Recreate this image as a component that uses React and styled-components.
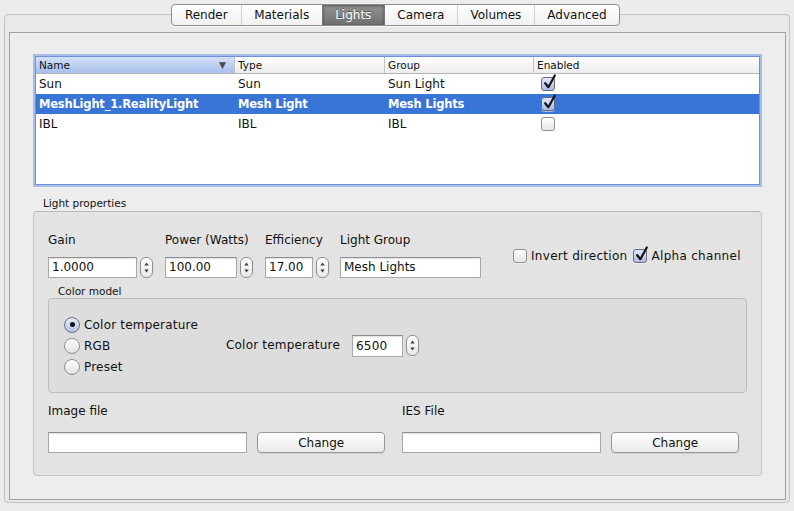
import React from "react";
import styled, { createGlobalStyle } from "styled-components";

const Global = createGlobalStyle`
  html, body { margin: 0; padding: 0; background: #ececec; }
  body { font-family: "DejaVu Sans", "Liberation Sans", sans-serif; font-size: 12px; color: #111; }
  * { box-sizing: border-box; }
`;

const Page = styled.div`
  width: 794px;
  height: 511px;
  background: #ececec;
  padding: 14px 0 0 4px;
  overflow: hidden;
`;

const TabFrame = styled.div`
  width: 786px;
  border: 1px solid #c2c2c2;
  border-radius: 4px;
  background: #e9e9e9;
  display: flex;
  flex-direction: column;
  padding: 0 3px 2px 4px;
`;

const TabBar = styled.div`
  align-self: center;
  margin: -11px 0 0 -4px;
  height: 22px;
  display: flex;
  border: 1px solid #8e8e8e;
  border-radius: 4px;
  overflow: hidden;
  background: linear-gradient(#ffffff, #f1f1f1);
  box-shadow: 0 1px 0 rgba(255,255,255,0.7);
`;

const Tab = styled.div`
  padding: 0 ${p => p.$pad}px;
  display: flex;
  align-items: center;
  font-size: 12px;
  color: ${p => (p.$active ? "#fff" : "#111")};
  background: ${p => (p.$active ? "linear-gradient(#939393, #6f6f6f)" : "transparent")};
  box-shadow: ${p => (p.$active ? "inset 0 1px 3px rgba(0,0,0,0.45)" : "none")};
  text-shadow: ${p => (p.$active ? "0 -1px 0 rgba(0,0,0,0.4)" : "none")};
  border-left: ${p => (p.$first ? "none" : p.$active || p.$afterActive ? "1px solid #777" : "1px solid #d0d0d0")};
`;

const InnerPane = styled.div`
  margin-top: 6px;
  border: 1px solid #a2a2a2;
  background: #ededed;
  padding: 21px 23px 23px 23px;
  display: flex;
  flex-direction: column;
`;

const Table = styled.div`
  margin: 2px;
  height: 129px;
  background: #fff;
  border: 1px solid #6f8fd8;
  box-shadow: 0 0 0 2px #a9bdea;
  display: flex;
  flex-direction: column;
`;

const cols = "198px 150px 149px 1fr";

const HeaderRow = styled.div`
  display: grid;
  grid-template-columns: ${cols};
  height: 17px;
  border-bottom: 1px solid #b5b5b5;
  background: linear-gradient(#ffffff, #ececec);
`;

const HeaderCell = styled.div`
  display: flex;
  align-items: center;
  justify-content: space-between;
  padding: 0 8px 0 3px;
  font-size: 10.5px;
  color: #111;
  border-left: ${p => (p.$first ? "none" : "1px solid #c3c3c3")};
  background: ${p => (p.$sorted ? "linear-gradient(#d4e0f7, #a8c0ee)" : "transparent")};
`;

const SortArrow = styled.span`
  font-size: 9px;
  color: #4a4a4a;
`;

const Row = styled.div`
  display: grid;
  grid-template-columns: ${cols};
  height: 20px;
  align-items: center;
  background: ${p => (p.$selected ? "#3875d7" : "transparent")};
  color: ${p => (p.$selected ? "#fff" : "#111")};
  font-weight: ${p => (p.$selected ? "bold" : "normal")};
  font-size: ${p => (p.$selected ? "11.5px" : "12px")};
  letter-spacing: ${p => (p.$selected ? "-0.2px" : "0")};
`;

const Cell = styled.div`
  padding-left: ${p => (p.$first ? 3 : 4)}px;
  white-space: nowrap;
  overflow: hidden;
`;

const CheckCell = styled.div`
  padding-left: 8px;
  display: flex;
  align-items: center;
`;

const BoxWrap = styled.span`
  position: relative;
  width: 14px;
  height: 14px;
  flex: none;
  display: inline-block;
  border: 1px solid ${p => (p.$checked ? "#6b6b86" : "#8f8f8f")};
  border-radius: 3px;
  background: ${p => (p.$checked ? "linear-gradient(#dfe6f7, #aebde6)" : "linear-gradient(#ffffff, #e6e6e6)")};
  box-shadow: 0 1px 0 rgba(255,255,255,0.5);
`;

const Tick = styled.svg`
  position: absolute;
  left: 1px;
  top: -4px;
  overflow: visible;
`;

const CheckBox = ({ checked }) => (
  <BoxWrap $checked={checked}>
    {checked && (
      <Tick width="14" height="16" viewBox="0 0 14 16">
        <path d="M2.2 9.2 L5.4 13.2 L11.8 1.4" fill="none" stroke="#151515" strokeWidth="2.2" strokeLinecap="round" strokeLinejoin="round" />
      </Tick>
    )}
  </BoxWrap>
);

const SmallLabel = styled.div`
  font-size: 10.5px;
  line-height: 14px;
  height: 14px;
  margin: ${p => p.$m};
  padding-left: ${p => p.$indent}px;
  color: #111;
`;

const GroupBox = styled.div`
  margin-top: 1px;
  border: 1px solid #c4c4c4;
  border-top-color: #b8b8b8;
  border-radius: 4px;
  background: #e3e3e3;
  padding: 21px 14px 22px 14px;
  display: flex;
  flex-direction: column;
`;

const TopRow = styled.div`
  display: flex;
  align-items: center;
  height: 45px;
`;

const Field = styled.div`
  display: flex;
  flex-direction: column;
  gap: 9px;
  margin-right: ${p => p.$mr}px;
`;

const Label = styled.div`
  font-size: 12px;
  line-height: 15px;
  height: 15px;
  white-space: nowrap;
`;

const InputRow = styled.div`
  display: flex;
  align-items: center;
  gap: ${p => p.$gap ?? 3}px;
`;

const TextInput = styled.div`
  width: ${p => p.$w}px;
  height: ${p => p.$h || 21}px;
  border: 1px solid #a8a8a8;
  border-top-color: #8e8e8e;
  background: #fff;
  box-shadow: inset 0 1px 1px rgba(0,0,0,0.12);
  font-size: 12px;
  line-height: ${p => (p.$h || 21) - 2}px;
  padding-left: 3px;
  white-space: nowrap;
  overflow: hidden;
`;

const SpinBox = styled.div`
  width: 13px;
  height: 21px;
  border: 1px solid #8f8f8f;
  border-radius: 6px;
  background: linear-gradient(#ffffff, #e9e9e9);
  display: flex;
  align-items: center;
  justify-content: center;
`;

const Spinner = () => (
  <SpinBox>
    <svg width="7" height="13" viewBox="0 0 7 13">
      <path d="M3.5 1.5 L5.6 4.6 L1.4 4.6 Z" fill="#3a3a3a" />
      <path d="M3.5 11.5 L5.6 8.4 L1.4 8.4 Z" fill="#3a3a3a" />
    </svg>
  </SpinBox>
);

const CheckOption = styled.label`
  display: flex;
  align-items: center;
  gap: 4px;
  font-size: 12px;
  letter-spacing: 0.3px;
  margin-left: ${p => p.$ml}px;
  white-space: nowrap;
`;

const ColorBox = styled.div`
  border: 1px solid #bcbcbc;
  border-radius: 4px;
  background: #dddddd;
  padding: 15px 15px 15px 15px;
  display: flex;
  align-items: center;
`;

const RadioGroup = styled.div`
  width: 162px;
  display: flex;
  flex-direction: column;
`;

const RadioRow = styled.div`
  height: 21px;
  display: flex;
  align-items: center;
  gap: 4px;
  font-size: 12px;
  letter-spacing: 0.2px;
`;

const RadioCircle = styled.span`
  width: 16px;
  height: 16px;
  border-radius: 50%;
  border: 1px solid ${p => (p.$on ? "#6b6b86" : "#8f8f8f")};
  background: ${p => (p.$on ? "linear-gradient(#e6ecf9, #b3c3e8)" : "linear-gradient(#ffffff, #e2e2e2)")};
  display: flex;
  align-items: center;
  justify-content: center;
  flex: none;
`;

const Dot = styled.span`
  width: 5px;
  height: 5px;
  border-radius: 50%;
  background: #111;
`;

const Radio = ({ on, children }) => (
  <RadioRow>
    <RadioCircle $on={on}>{on && <Dot />}</RadioCircle>
    {children}
  </RadioRow>
);

const TempRow = styled.div`
  display: flex;
  align-items: center;
  gap: 12px;
  letter-spacing: 0.2px;
`;

const FileGrid = styled.div`
  margin-top: 11px;
  display: grid;
  grid-template-columns: 337px 337px;
  column-gap: 17px;
`;

const FileCol = styled.div`
  display: flex;
  flex-direction: column;
  gap: 13px;
`;

const Button = styled.button`
  width: 128px;
  height: 21px;
  margin-left: 10px;
  border: 1px solid #979797;
  border-radius: 4px;
  background: linear-gradient(#ffffff, #e9e9e9);
  box-shadow: 0 1px 1px rgba(0,0,0,0.08);
  font-family: "DejaVu Sans", "Liberation Sans", sans-serif;
  font-size: 12px;
  color: #111;
  padding: 0;
`;

const tabs = [
  { t: "Render", pad: 13 },
  { t: "Materials", pad: 12.5 },
  { t: "Lights", pad: 12.5, active: true },
  { t: "Camera", pad: 12.5 },
  { t: "Volumes", pad: 12.5 },
  { t: "Advanced", pad: 12.5 },
];

const rows = [
  { name: "Sun", type: "Sun", group: "Sun Light", on: true },
  { name: "MeshLight_1.RealityLight", type: "Mesh Light", group: "Mesh Lights", on: true, sel: true },
  { name: "IBL", type: "IBL", group: "IBL", on: false },
];

export default function App() {
  return (
    <>
      <Global />
      <Page>
        <TabFrame>
          <TabBar>
            {tabs.map((tb, i) => (
              <Tab key={tb.t} $pad={tb.pad} $first={i === 0} $active={tb.active} $afterActive={i > 0 && tabs[i - 1].active}>
                {tb.t}
              </Tab>
            ))}
          </TabBar>
          <InnerPane>
            <Table>
              <HeaderRow>
                <HeaderCell $first $sorted>Name<SortArrow>▼</SortArrow></HeaderCell>
                <HeaderCell>Type</HeaderCell>
                <HeaderCell>Group</HeaderCell>
                <HeaderCell>Enabled</HeaderCell>
              </HeaderRow>
              {rows.map(r => (
                <Row key={r.name} $selected={r.sel}>
                  <Cell $first>{r.name}</Cell>
                  <Cell>{r.type}</Cell>
                  <Cell>{r.group}</Cell>
                  <CheckCell><CheckBox checked={r.on} /></CheckCell>
                </Row>
              ))}
            </Table>
            <SmallLabel $m="9px 0 0 0" $indent={10}>Light properties</SmallLabel>
            <GroupBox>
              <TopRow>
                <Field $mr={12}>
                  <Label>Gain</Label>
                  <InputRow><TextInput $w={89}>1.0000</TextInput><Spinner /></InputRow>
                </Field>
                <Field $mr={12}>
                  <Label>Power (Watts)</Label>
                  <InputRow><TextInput $w={72}>100.00</TextInput><Spinner /></InputRow>
                </Field>
                <Field $mr={11}>
                  <Label>Efficiency</Label>
                  <InputRow><TextInput $w={48}>17.00</TextInput><Spinner /></InputRow>
                </Field>
                <Field $mr={0}>
                  <Label>Light Group</Label>
                  <InputRow><TextInput $w={141}>Mesh Lights</TextInput></InputRow>
                </Field>
                <CheckOption $ml={32}><CheckBox checked={false} />Invert direction</CheckOption>
                <CheckOption $ml={6}><CheckBox checked />Alpha channel</CheckOption>
              </TopRow>
              <SmallLabel $m="6px 0 0 0" $indent={10}>Color model</SmallLabel>
              <ColorBox>
                <RadioGroup>
                  <Radio on>Color temperature</Radio>
                  <Radio>RGB</Radio>
                  <Radio>Preset</Radio>
                </RadioGroup>
                <TempRow>
                  <Label>Color temperature</Label>
                  <InputRow><TextInput $w={51} $h={22}>6500</TextInput><Spinner /></InputRow>
                </TempRow>
              </ColorBox>
              <FileGrid>
                <FileCol>
                  <Label>Image file</Label>
                  <InputRow $gap={0}><TextInput $w={200} $h={21} /><Button>Change</Button></InputRow>
                </FileCol>
                <FileCol>
                  <Label>IES File</Label>
                  <InputRow $gap={0}><TextInput $w={200} $h={21} /><Button>Change</Button></InputRow>
                </FileCol>
              </FileGrid>
            </GroupBox>
          </InnerPane>
        </TabFrame>
      </Page>
    </>
  );
}
